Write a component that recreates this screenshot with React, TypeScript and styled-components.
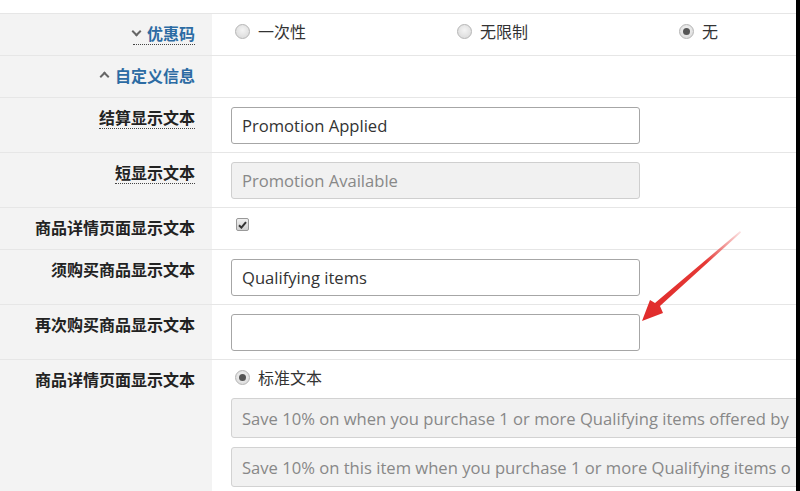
import React from 'react';
import styled, { createGlobalStyle, css } from 'styled-components';

const GlobalStyle = createGlobalStyle`
  html, body {
    margin: 0;
    padding: 0;
    background: #ffffff;
    overflow: hidden;
  }
  body {
    font-family: "Open Sans", "Noto Sans CJK SC", sans-serif;
    color: #333;
  }
`;

const CJK = `"Noto Sans CJK SC", "Open Sans", sans-serif`;

export default function App() {
  return (
    <>
      <GlobalStyle />
      <PageStyled>
        <FormStyled>
          <TopStrip />
          <RowStyled>
            <LabelCell>
              <LabelText link dotted>
                <Chevron dir="down" />
                优惠码
              </LabelText>
            </LabelCell>
            <FieldCell>
              <RadioGroup>
                <RadioOption>
                  <RadioDot />
                  <OptionText>一次性</OptionText>
                </RadioOption>
                <RadioOption>
                  <RadioDot />
                  <OptionText>无限制</OptionText>
                </RadioOption>
                <RadioOption>
                  <RadioDot checked />
                  <OptionText>无</OptionText>
                </RadioOption>
              </RadioGroup>
            </FieldCell>
          </RowStyled>
          <RowStyled>
            <LabelCell>
              <LabelText link>
                <Chevron dir="up" />
                自定义信息
              </LabelText>
            </LabelCell>
            <FieldCell />
          </RowStyled>
          <RowStyled>
            <LabelCell>
              <LabelText dotted>结算显示文本</LabelText>
            </LabelCell>
            <FieldCell>
              <TextBox>Promotion Applied</TextBox>
            </FieldCell>
          </RowStyled>
          <RowStyled>
            <LabelCell>
              <LabelText dotted>短显示文本</LabelText>
            </LabelCell>
            <FieldCell>
              <TextBox disabled>Promotion Available</TextBox>
            </FieldCell>
          </RowStyled>
          <RowStyled>
            <LabelCell>
              <LabelText>商品详情页面显示文本</LabelText>
            </LabelCell>
            <FieldCell>
              <CheckBox>
                <svg width="9" height="8" viewBox="0 0 9 8">
                  <path d="M1 4.2 L3.4 6.6 L8 1.2" fill="none" stroke="#333" strokeWidth="2" />
                </svg>
              </CheckBox>
            </FieldCell>
          </RowStyled>
          <RowStyled>
            <LabelCell>
              <LabelText>须购买商品显示文本</LabelText>
            </LabelCell>
            <FieldCell>
              <TextBox>Qualifying items</TextBox>
            </FieldCell>
          </RowStyled>
          <RowStyled>
            <LabelCell>
              <LabelText>再次购买商品显示文本</LabelText>
            </LabelCell>
            <FieldCell>
              <TextBox />
            </FieldCell>
          </RowStyled>
          <RowStyled>
            <LabelCell>
              <LabelText>商品详情页面显示文本</LabelText>
            </LabelCell>
            <FieldCell>
              <StackStyled>
                <RadioOption>
                  <RadioDot checked />
                  <OptionText>标准文本</OptionText>
                </RadioOption>
                <WideBox>Save 10% on when you purchase 1 or more Qualifying items offered by</WideBox>
                <WideBox>Save 10% on this item when you purchase 1 or more Qualifying items o</WideBox>
              </StackStyled>
            </FieldCell>
          </RowStyled>
        </FormStyled>
        <EdgeStyled />
        <ArrowStyled width="120" height="100" viewBox="0 0 120 100">
          <defs>
            <linearGradient id="arrowFade" x1="1" y1="0" x2="0" y2="1">
              <stop offset="0" stopColor="#e84a4a" stopOpacity="0.15" />
              <stop offset="0.35" stopColor="#e53935" />
              <stop offset="1" stopColor="#e02b2b" />
            </linearGradient>
          </defs>
          <polygon
            points="100,4 101,5.5 20,79 23,86 2,94 10,73 15,76"
            fill="url(#arrowFade)"
          />
        </ArrowStyled>
      </PageStyled>
    </>
  );
}

const PageStyled = styled.div`
  position: relative;
  width: 800px;
  height: 491px;
  overflow: hidden;
  display: flex;
  align-items: flex-start;
`;

const FormStyled = styled.div`
  width: 796px;
  flex-shrink: 0;
`;

const EdgeStyled = styled.div`
  width: 4px;
  height: 491px;
  background: #000;
`;

const TopStrip = styled.div`
  height: 13px;
`;

const RowStyled = styled.div`
  display: grid;
  grid-template-columns: 212px 1fr;
  border-top: 1px solid #e6e6e6;
`;

const LabelCell = styled.div`
  background: #f3f3f3;
  padding: 9px 17px 0 0;
  display: flex;
  justify-content: flex-end;
  align-items: flex-start;
`;

const LabelText = styled.span<{ link?: boolean; dotted?: boolean }>`
  display: flex;
  align-items: center;
  font-family: ${CJK};
  font-size: 16px;
  font-weight: 700;
  line-height: 21px;
  color: ${({ link }) => (link ? '#2c6ba3' : '#222')};
  ${({ dotted }) =>
    dotted &&
    css`
      border-bottom: 1px dotted #444;
    `}
`;

const Chevron = styled.span<{ dir: 'up' | 'down' }>`
  display: inline-block;
  width: 5px;
  height: 5px;
  margin-right: 7px;
  border-left: 2px solid #666;
  border-top: 2px solid #666;
  transform: ${({ dir }) => (dir === 'up' ? 'translateY(1px) rotate(45deg)' : 'translateY(-2px) rotate(225deg)')};
`;

const FieldCell = styled.div`
  padding: 9px 0 8px 19px;
  min-height: 24px;
  display: flex;
  align-items: flex-start;
`;

const RadioGroup = styled.div`
  display: grid;
  grid-template-columns: repeat(3, 222px);
  width: 100%;
`;

const RadioOption = styled.label`
  display: flex;
  align-items: center;
  height: 16px;
  padding-left: 4px;
`;

const RadioDot = styled.span<{ checked?: boolean }>`
  box-sizing: border-box;
  width: 15px;
  height: 15px;
  border-radius: 50%;
  border: 1px solid #b5b5b5;
  background: radial-gradient(circle at 50% 40%, #f4f4f4, #d6d6d6);
  position: relative;
  ${({ checked }) =>
    checked &&
    css`
      &::after {
        content: '';
        position: absolute;
        left: 3px;
        top: 3px;
        width: 7px;
        height: 7px;
        border-radius: 50%;
        background: #555;
      }
    `}
`;

const OptionText = styled.span`
  margin-left: 8px;
  font-family: ${CJK};
  font-size: 16px;
  line-height: 16px;
  color: #333;
`;

const TextBox = styled.div<{ disabled?: boolean }>`
  box-sizing: border-box;
  width: 409px;
  height: 37px;
  padding: 0 10px;
  display: flex;
  align-items: center;
  border: 1px solid ${({ disabled }) => (disabled ? '#cfcfcf' : '#a6a6a6')};
  border-radius: 3px;
  background: ${({ disabled }) => (disabled ? '#f1f1f1' : '#fff')};
  color: ${({ disabled }) => (disabled ? '#888' : '#333')};
  font-size: 16.6px;
  white-space: nowrap;
`;

const CheckBox = styled.span`
  box-sizing: border-box;
  margin: 1px 0 0 5px;
  width: 13px;
  height: 13px;
  border: 1px solid #999;
  border-radius: 2px;
  background: linear-gradient(#f0f0f0, #d0d0d0);
  display: flex;
  align-items: center;
  justify-content: center;
`;

const StackStyled = styled.div`
  display: flex;
  flex-direction: column;
  gap: 9px;
  width: 100%;
  min-width: 0;
`;

const WideBox = styled.div`
  box-sizing: border-box;
  height: 40px;
  width: 600px;
  padding: 0 10px;
  display: flex;
  align-items: center;
  border: 1px solid #d2d2d2;
  border-radius: 3px;
  background: #f1f1f1;
  color: #888;
  font-size: 16.6px;
  white-space: nowrap;
  &:nth-child(2) {
    margin-top: 4px;
  }
`;

const ArrowStyled = styled.svg`
  position: absolute;
  left: 640px;
  top: 227px;
`;
